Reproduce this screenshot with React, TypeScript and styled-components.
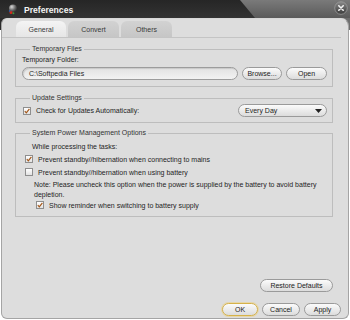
import styled, { createGlobalStyle } from "styled-components";

const GlobalStyle = createGlobalStyle`
	html, body {
		margin: 0;
		padding: 0;
		background: #ffffff;
	}
	body {
		font-family: "Liberation Sans", Arial, sans-serif;
		font-size: 7px;
		color: #1e1e1e;
	}
`;

const Window = styled.div`
	width: 350px;
	height: 319px;
	display: flex;
	flex-direction: column;
	background:
		linear-gradient(to right, #2c2c2c 0 244px, #6a6a6a 252px, #6f6f6f 100%)
			top / 100% 30px no-repeat,
		#ffffff;
`;

const TitleBar = styled.div`
	position: relative;
	height: 18px;
	flex: none;
	display: flex;
	align-items: center;
	padding-left: 8px;
	gap: 6px;
	background: linear-gradient(#262626, #333333);
	overflow: hidden;

	&::after {
		content: "";
		position: absolute;
		top: 0;
		right: 0;
		bottom: 0;
		width: 110px;
		background: linear-gradient(#7a7a7a, #5a5a5a);
		clip-path: polygon(0 0, 100% 0, 100% 100%, 15px 100%);
	}
`;

const TitleText = styled.span`
	font-size: 8.6px;
	font-weight: bold;
	color: #f4f4f4;
	line-height: 10px;
	padding-top: 1px;
`;

const CloseButton = styled.span`
	position: absolute;
	right: 2px;
	top: 1px;
	z-index: 1;
	width: 14px;
	height: 14px;
`;

const Body = styled.div`
	flex: 1;
	margin: 0 1px;
	display: flex;
	flex-direction: column;
	background: #dddddd;
	border: 1px solid #a4a4a4;
	border-top-color: #d8d8d8;
	border-radius: 6px 8px 6px 6px;
`;

const TabStrip = styled.div`
	display: flex;
	gap: 2px;
	padding: 2px 0 0 14px;
	margin-right: 7px;
	border-bottom: 1px solid #c4c4c4;
`;

const Tab = styled.div<{ $active?: boolean }>`
	width: ${(p) => (p.$active ? 50 : 51)}px;
	height: 16px;
	display: flex;
	align-items: center;
	justify-content: center;
	border-radius: 6px 6px 0 0;
	color: #3a3a3a;
	background: ${(p) =>
		p.$active
			? "linear-gradient(#f4f4f4, #e6e6e6)"
			: "linear-gradient(#d2d2d2, #c6c6c6)"};
`;

const Content = styled.div`
	display: flex;
	flex-direction: column;
	padding: 0 15px 0 13px;
`;

const Group = styled.fieldset<{ $top: number; $pt: number; $pb: number }>`
	margin: ${(p) => p.$top}px 0 0;
	padding: ${(p) => p.$pt}px 5px ${(p) => p.$pb}px 6px;
	min-width: 0;
	border: 1px solid #bdbdbd;
	display: flex;
	flex-direction: column;
`;

const Legend = styled.legend`
	margin-left: 8px;
	padding: 0 2px;
	line-height: 10px;
	color: #333;
`;

const Label = styled.div<{ $indent?: number; $mt?: number }>`
	line-height: 10px;
	margin-top: ${(p) => p.$mt ?? 0}px;
	padding-left: ${(p) => p.$indent ?? 0}px;
`;

const Row = styled.div<{ $mt?: number }>`
	display: flex;
	align-items: center;
	gap: 4px;
	margin-top: ${(p) => p.$mt ?? 0}px;
`;

const CheckRow = styled.label<{ $indent?: number; $mt?: number }>`
	display: flex;
	align-items: center;
	gap: 5px;
	height: 10px;
	margin-top: ${(p) => p.$mt ?? 0}px;
	padding-left: ${(p) => p.$indent ?? 0}px;
`;

const Box = styled.span`
	width: 6px;
	height: 6px;
	flex: none;
	border: 1px solid #8e8e8e;
	background: linear-gradient(#ffffff, #e2e2e2);
	display: flex;
	align-items: center;
	justify-content: center;
`;

const PathInput = styled.div`
	flex: 1;
	height: 11px;
	display: flex;
	align-items: center;
	padding-left: 6px;
	border: 1px solid #9c9c9c;
	border-radius: 7px;
	background: linear-gradient(#e2e2e2, #f2f2f2);
	box-shadow: inset 1px 1px 1px rgba(0, 0, 0, 0.12);
`;

const Button = styled.div<{ $w: number; $default?: boolean }>`
	width: ${(p) => p.$w}px;
	height: 11px;
	flex: none;
	display: flex;
	align-items: center;
	justify-content: center;
	border: 1px solid ${(p) => (p.$default ? "#d6b24a" : "#9a9a9a")};
	border-radius: 7px;
	background: linear-gradient(#fbfbfb, #dcdcdc);
	box-shadow: ${(p) =>
		p.$default ? "0 0 0 1px rgba(240, 210, 120, 0.5)" : "none"};
	color: #222;
`;

const Select = styled.div`
	width: 77px;
	height: 11px;
	margin-left: auto;
	display: flex;
	align-items: center;
	justify-content: space-between;
	padding: 0 4px 0 6px;
	border: 1px solid #9a9a9a;
	border-radius: 7px;
	background: linear-gradient(#fbfbfb, #dcdcdc);
`;

const Footer = styled.div`
	margin-top: auto;
	display: flex;
	flex-direction: column;
	align-items: flex-end;
	padding-bottom: 2px;
`;

const RestoreRow = styled.div`
	display: flex;
	padding-right: 15px;
`;

const ButtonBar = styled.div`
	display: flex;
	gap: 4px;
	margin-top: 11px;
	padding-right: 7px;
`;

const Check = ({ checked }: { checked?: boolean }) => (
	<Box>
		{checked && (
			<svg width="6" height="6" viewBox="0 0 6 6">
				<path
					d="M0.8 3.2 L2.3 4.8 L5.4 0.8"
					fill="none"
					stroke="#a4581a"
					strokeWidth="1.2"
				/>
			</svg>
		)}
	</Box>
);

const AppIcon = () => (
	<svg width="10" height="11" viewBox="0 0 10 11">
		<defs>
			<radialGradient id="ball" cx="0.35" cy="0.3" r="0.7">
				<stop offset="0" stopColor="#d8d8d8" />
				<stop offset="0.6" stopColor="#6a6a6a" />
				<stop offset="1" stopColor="#303030" />
			</radialGradient>
		</defs>
		<circle cx="5" cy="4.5" r="4" fill="url(#ball)" />
		<circle cx="3" cy="8.6" r="1.5" fill="#d22a1e" />
		<circle cx="5.4" cy="9.2" r="1" fill="#3f9a3a" />
		<circle cx="1.6" cy="7" r="0.8" fill="#2a6ad0" />
	</svg>
);

const CloseIcon = () => (
	<CloseButton>
		<svg width="14" height="14" viewBox="0 0 14 14">
			<defs>
				<linearGradient id="cls" x1="0" y1="0" x2="0" y2="1">
					<stop offset="0" stopColor="#8a8a8a" />
					<stop offset="1" stopColor="#3a3a3a" />
				</linearGradient>
			</defs>
			<circle cx="7" cy="7" r="6.3" fill="url(#cls)" stroke="#9a9a9a" strokeWidth="0.8" />
			<path
				d="M4.8 4.8 L9.2 9.2 M9.2 4.8 L4.8 9.2"
				stroke="#f2f2f2"
				strokeWidth="1.6"
				strokeLinecap="round"
			/>
		</svg>
	</CloseButton>
);

const Arrow = () => (
	<svg width="7" height="4" viewBox="0 0 7 4">
		<path d="M0 0 H7 L3.5 4 Z" fill="#222" />
	</svg>
);

const App = () => {
	return (
		<>
			<GlobalStyle />
			<Window>
				<TitleBar>
					<AppIcon />
					<TitleText>Preferences</TitleText>
					<CloseIcon />
				</TitleBar>
				<Body>
					<TabStrip>
						<Tab $active>General</Tab>
						<Tab>Convert</Tab>
						<Tab>Others</Tab>
					</TabStrip>
					<Content>
						<Group $top={6} $pt={1} $pb={6}>
							<Legend>Temporary Files</Legend>
							<Label>Temporary Folder:</Label>
							<Row $mt={2}>
								<PathInput>C:\Softpedia Files</PathInput>
								<Button $w={38}>Browse...</Button>
								<Button $w={39}>Open</Button>
							</Row>
						</Group>
						<Group $top={6} $pt={1} $pb={5}>
							<Legend>Update Settings</Legend>
							<Row>
								<CheckRow $indent={1}>
									<Check checked />
									Check for Updates Automatically:
								</CheckRow>
								<Select>
									Every Day
									<Arrow />
								</Select>
							</Row>
						</Group>
						<Group $top={5} $pt={4} $pb={6}>
							<Legend>System Power Management Options</Legend>
							<Label $indent={10}>While processing the tasks:</Label>
							<CheckRow $indent={3} $mt={2}>
								<Check checked />
								Prevent standby//hibernation when connecting to mains
							</CheckRow>
							<CheckRow $indent={3} $mt={3}>
								<Check />
								Prevent standby//hibernation when using battery
							</CheckRow>
							<Label $indent={12} $mt={3}>
								Note: Please uncheck this option when the power is supplied by
								the battery to avoid battery
								<br />
								depletion.
							</Label>
							<CheckRow $indent={14}>
								<Check checked />
								Show reminder when switching to battery supply
							</CheckRow>
						</Group>
					</Content>
					<Footer>
						<RestoreRow>
							<Button $w={71}>Restore Defaults</Button>
						</RestoreRow>
						<ButtonBar>
							<Button $w={34} $default>
								OK
							</Button>
							<Button $w={36}>Cancel</Button>
							<Button $w={35}>Apply</Button>
						</ButtonBar>
					</Footer>
				</Body>
			</Window>
		</>
	);
};

export default App;
